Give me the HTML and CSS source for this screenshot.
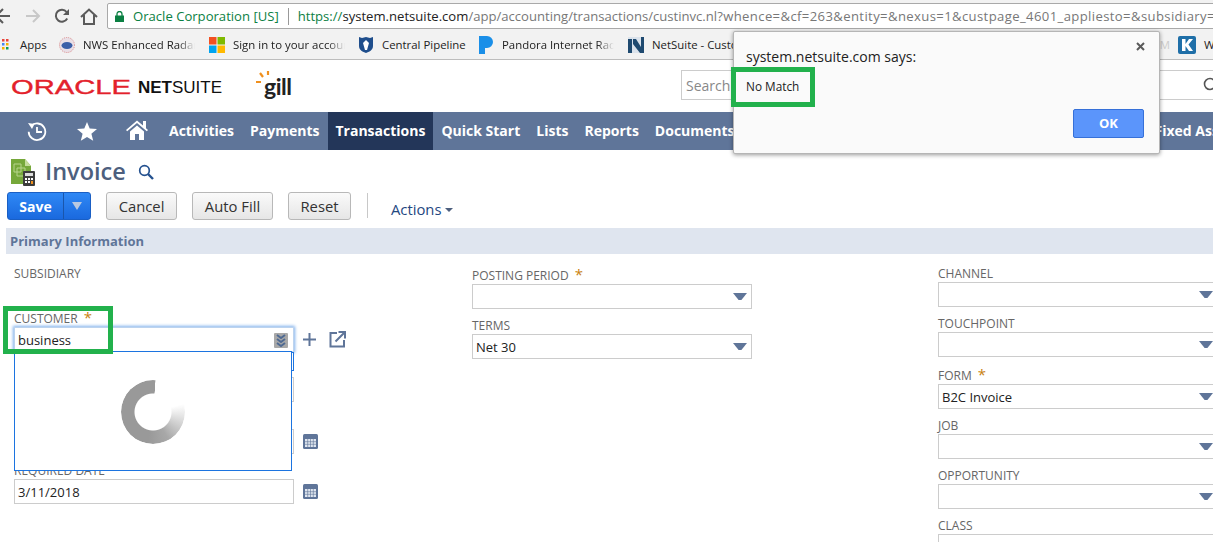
FILE: index.html
```html
<!DOCTYPE html>
<html lang="en">
<head>
<meta charset="utf-8">
<title>Invoice - NetSuite</title>
<link rel="stylesheet" href="styles.css">
</head>
<body>
<div class="page">
  <header class="toolbar">
    <svg class="tb-icon back" width="14" height="16" viewBox="0 0 14 16"><path d="M10 8H-4M3 1L-4 8l7 7" fill="none" stroke="#5a5a5a" stroke-width="2"/></svg>
    <svg class="tb-icon fwd" width="16" height="16" viewBox="0 0 16 16"><path d="M1 8h13M8 2l6 6-6 6" fill="none" stroke="#c8c8c8" stroke-width="2"/></svg>
    <svg class="tb-icon reload" width="16" height="16" viewBox="0 0 16 16"><path d="M13.2 10.5A6 6 0 1 1 12.6 4" fill="none" stroke="#5a5a5a" stroke-width="2"/><path d="M15 1v6H9z" fill="#5a5a5a"/></svg>
    <svg class="tb-icon home" width="18" height="17" viewBox="0 0 18 17"><path d="M1 9l8-7.5L17 9M4 7v9h10V7" fill="none" stroke="#5a5a5a" stroke-width="2"/></svg>
    <div class="omnibox">
      <svg class="lock" width="9" height="11" viewBox="0 0 9 11"><path d="M0 4.500h9V11H0z" fill="#0b8043"/><path d="M2 5V3a2.500 2.500 0 0 1 5 0v2" fill="none" stroke="#0b8043" stroke-width="1.300"/></svg>
      <span class="org">Oracle Corporation [US]</span>
      <span class="sep"></span>
      <span class="url"><span class="scheme">https://</span><span class="host">system.netsuite.com</span>/app/accounting/transactions/custinvc.nl<span class="query">?whence=&amp;cf=263&amp;entity=&amp;nexus=1&amp;custpage_4601_appliesto=&amp;subsidiary=</span></span>
    </div>
  </header>

  <nav class="bookmarks">
    <div class="bm bm-apps">
      <svg width="10" height="12" viewBox="0 0 10 12"><g><rect width="2.500" height="2.500" fill="#e8453c"/><rect x="4" width="2.500" height="2.500" fill="#e8453c"/><rect x="0" y="4" width="2.500" height="2.500" fill="#4285f4"/><rect x="4" y="4" width="2.500" height="2.500" fill="#f4b400"/><rect y="8" width="2.500" height="2.500" fill="#f4b400"/><rect x="4" y="8" width="2.500" height="2.500" fill="#0f9d58"/></g></svg>
      <span>Apps</span>
    </div>
    <div class="bm bm-nws">
      <svg width="16" height="16" viewBox="0 0 16 16"><circle cx="8" cy="8" r="7.500" fill="#e9dfe6" stroke="#d98a8a" stroke-dasharray="1 1"/><ellipse cx="8" cy="8.500" rx="5.500" ry="3.500" fill="#3a5fa8"/></svg>
      <span class="fade">NWS Enhanced Radar</span>
    </div>
    <div class="bm bm-ms">
      <svg width="16" height="16" viewBox="0 0 16 16"><rect width="7.500" height="7.500" fill="#f25022"/><rect x="8.500" width="7.500" height="7.500" fill="#7fba00"/><rect y="8.500" width="7.500" height="7.500" fill="#00a4ef"/><rect x="8.500" y="8.500" width="7.500" height="7.500" fill="#ffb900"/></svg>
      <span class="fade">Sign in to your account</span>
    </div>
    <div class="bm bm-cp">
      <svg width="16" height="18" viewBox="0 0 16 18"><path d="M1 1l3 1 4-1 4 1 3-1v9c0 4-4 6-7 7-3-1-7-3-7-7z" fill="#1f4e8c"/><path d="M8 4l3 3-2 7H7L5 7z" fill="#fff"/></svg>
      <span>Central Pipeline</span>
    </div>
    <div class="bm bm-pan">
      <svg width="15" height="18" viewBox="0 0 15 18"><path d="M0 0h8a6 6 0 0 1 0 12H6v6H0z" fill="#1a8fe8"/></svg>
      <span class="fade">Pandora Internet Radio</span>
    </div>
    <div class="bm bm-ns">
      <svg width="16" height="16" viewBox="0 0 16 16"><rect width="16" height="16" fill="#dbe3ec"/><path d="M0 2h4v14H0zM5 2h3l5 8V0h3v16h-4L5 7z" fill="#1f4a70"/></svg>
      <span>NetSuite - Customer Center</span>
      <span class="ghost">M</span>
    </div>
    <div class="bm bm-k">
      <svg width="18" height="18" viewBox="0 0 18 18"><rect width="18" height="18" rx="2" fill="#1f6fa8"/><path d="M4 3h3.500v5L11 3h4l-4.500 5.500L15 15h-4L7.500 10v5H4z" fill="#fff"/></svg>
      <span>W</span>
    </div>
  </nav>

  <div class="brand">
    <svg class="oracle" width="121" height="20" viewBox="0 0 121 20"><text x="0" y="17" textLength="120" lengthAdjust="spacingAndGlyphs">ORACLE</text></svg>
    <span class="netsuite"><b>NET</b>SUITE</span>
    <div class="gill">
      <svg class="rays" width="16" height="22" viewBox="0 0 16 22"><path d="M0 11h5M4 2l3 4M12 0v4" stroke="#f0901e" stroke-width="2.200" fill="none"/></svg>
      <span>gill</span>
    </div>
    <div class="global-search">
      <span>Search</span>
      <svg width="14" height="16" viewBox="0 0 14 16"><circle cx="8" cy="7" r="5.500" fill="none" stroke="#555" stroke-width="1.600"/></svg>
    </div>
  </div>

  <nav class="mainnav">
    <svg class="nav-ic ic-hist" width="20" height="21" viewBox="0 0 20 21"><path d="M4 5a8.300 8.300 0 1 1-2.300 5.700" fill="none" stroke="#fff" stroke-width="1.800"/><path d="M1 2l6.500 1L5 8z" fill="#fff"/><path d="M10 6v5h5" fill="none" stroke="#fff" stroke-width="1.800"/></svg>
    <svg class="nav-ic ic-star" width="20" height="19" viewBox="0 0 20 19"><path d="M10 0l2.700 6.600 7.300.5-5.600 4.600 1.800 7L10 14.900l-6.200 3.800 1.800-7L0 7.100l7.300-.5z" fill="#fff"/></svg>
    <svg class="nav-ic ic-home" width="22" height="20" viewBox="0 0 22 20"><path d="M0 10L11 0.500l6 5V1h3v7.200l2 1.800-1.200 1.300L11 3 1.200 11.300z" fill="#fff"/><path d="M4 11.500L11 5.500l7 6V20h-5v-6H9v6H4z" fill="#fff"/></svg>
    <a class="nav-item nav-first">Activities</a>
    <a class="nav-item">Payments</a>
    <a class="nav-item active">Transactions</a>
    <a class="nav-item">Quick Start</a>
    <a class="nav-item">Lists</a>
    <a class="nav-item">Reports</a>
    <a class="nav-item">Documents</a>
    <a class="nav-item nav-last">Fixed Assets</a>
  </nav>

  <div class="titlebar">
    <svg class="doc-ic" width="26" height="29" viewBox="0 0 26 29"><path d="M1 1h14l6 7v18H1z" fill="#76a83a"/><path d="M15 1l6 7h-6z" fill="#c5dc9c"/><path d="M4 6h7v8H4zM7 10h8v8H7z" fill="none" stroke="#b7d48c" stroke-width="1"/><rect x="13" y="13" width="12" height="15" rx="1" fill="#3c3c3c"/><rect x="15" y="15" width="8" height="3" fill="#ddd"/><path d="M15 20h2v2h-2zM18 20h2v2h-2zM21 20h2v2h-2zM15 23h2v2h-2zM18 23h2v2h-2z" fill="#fff"/><path d="M21 23h2v3h-2z" fill="#f0901e"/></svg>
    <h1>Invoice</h1>
    <svg class="find" width="16" height="16" viewBox="0 0 16 16"><circle cx="6.500" cy="6.500" r="4.800" fill="none" stroke="#24518f" stroke-width="1.700"/><path d="M10 10l5 5" stroke="#24518f" stroke-width="2.400"/></svg>
  </div>

  <div class="actions">
    <div class="save">
      <span class="save-main">Save</span>
      <span class="save-drop"><i></i></span>
    </div>
    <button class="btn btn-cancel">Cancel</button>
    <button class="btn btn-fill">Auto Fill</button>
    <button class="btn btn-reset">Reset</button>
    <span class="divider"></span>
    <span class="more">Actions<i></i></span>
  </div>

  <div class="section">Primary Information</div>

  <section class="form">
    <div class="col">
      <div class="field field-static"><label>SUBSIDIARY</label></div>
      <div class="field">
        <label>CUSTOMER <em>*</em></label>
        <div class="row">
          <div class="control focus">business
            <svg class="pick" width="14" height="15" viewBox="0 0 14 15"><rect width="14" height="15" rx="1" fill="#a8a8a8"/><path d="M3 2l4 3 4-3M3 6l4 3 4-3M3 10l4 3 4-3" fill="none" stroke="#4f6a92" stroke-width="2"/></svg>
          </div>
          <svg class="ic-plus" width="13" height="13" viewBox="0 0 13 13"><path d="M6.500 0v13M0 6.500h13" stroke="#5f7599" stroke-width="2"/></svg>
          <svg class="ic-open" width="17" height="17" viewBox="0 0 17 17"><path d="M8 2H1.500v13.500H15V9" fill="none" stroke="#5f7599" stroke-width="2"/><path d="M6.500 10.500L15 2M9.500 1H16v6.500" fill="none" stroke="#5f7599" stroke-width="2"/></svg>
        </div>
      </div>
      <div class="field">
        <label></label>
        <div class="control"></div>
      </div>
      <div class="field field-req">
        <label></label>
        <div class="row">
          <div class="control"></div>
          <svg class="ic-cal" width="15" height="15" viewBox="0 0 15 15"><rect width="15" height="15" rx="1.500" fill="#5f7599"/><path d="M2 5h11v8H2z" fill="#dfe5ef"/><path d="M4.700 5v8M7.500 5v8M10.300 5v8M2 7.700h11M2 10.300h11" stroke="#5f7599" stroke-width=".6"/></svg>
        </div>
      </div>
      <div class="field">
        <label>REQUIRED DATE</label>
        <div class="row">
          <div class="control">3/11/2018</div>
          <svg class="ic-cal" width="15" height="15" viewBox="0 0 15 15"><rect width="15" height="15" rx="1.500" fill="#5f7599"/><path d="M2 5h11v8H2z" fill="#dfe5ef"/><path d="M4.700 5v8M7.500 5v8M10.300 5v8M2 7.700h11M2 10.300h11" stroke="#5f7599" stroke-width=".6"/></svg>
        </div>
      </div>
    </div>

    <div class="col col-mid">
      <div class="field"><label>POSTING PERIOD <em>*</em></label><div class="control select"><i></i></div></div>
      <div class="field"><label>TERMS</label><div class="control select">Net 30<i></i></div></div>
    </div>

    <div class="col">
      <div class="field"><label>CHANNEL</label><div class="control select"><i></i></div></div>
      <div class="field"><label>TOUCHPOINT</label><div class="control select"><i></i></div></div>
      <div class="field field-req"><label>FORM <em>*</em></label><div class="control select">B2C Invoice<i></i></div></div>
      <div class="field"><label>JOB</label><div class="control select"><i></i></div></div>
      <div class="field"><label>OPPORTUNITY</label><div class="control select"><i></i></div></div>
      <div class="field"><label>CLASS</label><div class="control select"><i></i></div></div>
    </div>
  </section>

  <div class="under-list"></div>
  <div class="popup"><div class="spinner"></div></div>
  <div class="mark mark-customer"></div>

  <div class="dialog">
    <svg class="close" width="9" height="9" viewBox="0 0 9 9"><path d="M1 1l7 7M8 1L1 8" stroke="#5a5a5a" stroke-width="2"/></svg>
    <p class="dlg-title">system.netsuite.com says:</p>
    <p class="dlg-msg">No Match</p>
    <div class="dlg-foot"><button class="ok">OK</button></div>
  </div>
  <div class="mark mark-match"></div>
</div>
</body>
</html>
```

FILE: styles.css
```css
* { box-sizing: border-box; }
html, body { margin: 0; padding: 0; height: 542px; overflow: hidden; background: #fff; }
.page { position: relative; width: 1213px; height: 542px; overflow: hidden; font-family: "Open Sans", "Noto Sans", sans-serif; color: #333; }

/* browser chrome */
.toolbar { height: 30px; background: #f2f2f2; display: flex; align-items: center; position: relative; padding-top: 2px; }
.tb-icon { display: block; flex: none; }
.fwd { margin-left: 11px; }
.reload { margin-left: 13px; }
.home { margin-left: 10px; }
.omnibox { flex: none; margin-left: 9px; width: 1120px; height: 26px; background: #fff; border: 1px solid #a9a9a9; border-radius: 2px; display: flex; align-items: center; padding-left: 7px; white-space: nowrap; font-size: 13.100px; overflow: hidden; }
.lock { flex: none; }
.org { margin-left: 9px; color: #0b8043; }
.sep { width: 1px; height: 17px; background: #999; margin: 0 9px 0 9px; flex: none; }
.url { color: #777; }
.query { letter-spacing: .38px; }
.scheme { color: #0b8043; }
.host { color: #222; }

.bookmarks { height: 30px; background: #f2f2f2; border-bottom: 1px solid #bdbdbd; display: flex; align-items: center; padding-left: 2px; font-size: 11.400px; color: #222; white-space: nowrap; }
.bm { display: flex; align-items: center; gap: 8px; flex: none; overflow: hidden; }
.bm svg { flex: none; }
.bm-apps { width: 57px; }
.bm-nws { width: 150px; }
.bm-ms, .bm-pan { width: 149px; }
.bm-cp { width: 121px; }
.bm-ns { width: 550px; }
.bm-k { width: 36px; }
.ghost { margin-left: auto; margin-right: 8px; color: #ccc; }
.fade { width: 112px; overflow: hidden; -webkit-mask-image: linear-gradient(to right, #000 85%, transparent); mask-image: linear-gradient(to right, #000 85%, transparent); }

/* brand row */
.brand { height: 52px; display: flex; align-items: center; padding-left: 11px; background: #fff; }
.oracle { flex: none; display: block; margin-top: 1px; }
.oracle text { font-family: "Liberation Sans", sans-serif; font-size: 20px; fill: #e3212b; stroke: #e3212b; stroke-width: .35px; }
.netsuite { margin-left: 6px; font: 400 17px/1 "Liberation Sans", sans-serif; color: #111; flex: none; width: 118px; margin-top: 2px; }
.netsuite b { font-weight: 700; }
.gill { position: relative; flex: none; width: 40px; height: 36px; display: flex; align-items: center; margin-right: 385px; }
.rays { position: absolute; left: 0; top: 3px; }
.gill span { margin-left: 8px; font: 700 23px/1 "Lato", sans-serif; color: #222; letter-spacing: -.5px; }
.global-search { flex: none; width: 540px; height: 30px; border: 1px solid #ccc; display: flex; align-items: center; justify-content: space-between; padding: 0 0 0 4px; color: #888; font-size: 14px; overflow: hidden; margin-top: -2px; }
.global-search svg { margin-right: 4px; flex: none; }

/* nav */
.mainnav { height: 38px; background: #5f7599; display: flex; align-items: center; padding-left: 27px; white-space: nowrap; position: relative; }
.nav-ic { flex: none; display: block; }
.ic-star { margin-left: 30px; }
.ic-home { margin-left: 29px; margin-top: -2px; }
.nav-item { height: 38px; line-height: 38px; padding: 0 8px; color: #fff; font-size: 14px; font-weight: 700; flex: none; }
.nav-first { margin-left: 13px; }
.nav-item.active { background: #233659; }
.nav-last { margin-left: 404px; }

/* title */
.titlebar { height: 42px; display: flex; align-items: center; padding-left: 10px; }
.doc-ic { flex: none; display: block; margin-top: 2px; }
h1 { margin: 2px 0 0 9px; font-size: 23.500px; font-weight: 600; color: #4d5f7e; line-height: 1; }
.find { margin-left: 12px; flex: none; margin-top: 2px; }

/* actions */
.actions { height: 36px; display: flex; align-items: flex-start; padding-left: 7px; }
.save { width: 84px; height: 28px; display: flex; border: 1px solid #1a5fc4; border-radius: 3px; background: linear-gradient(#2f88f5, #1a69de); flex: none; }
.save-main { width: 56px; line-height: 27px; text-align: center; color: #fff; font-size: 14px; font-weight: 700; border-right: 1px solid #1a56ab; }
.save-drop { flex: 1; display: flex; align-items: center; justify-content: center; }
.save-drop i { width: 0; height: 0; border-left: 5px solid transparent; border-right: 5px solid transparent; border-top: 8px solid #b9c9e0; }
.btn { height: 28px; border: 1px solid #b8b8b8; border-radius: 3px; background: linear-gradient(#fafafa, #e6e6e6); font: 400 14.800px/1 "Open Sans", sans-serif; color: #333; padding: 1px 0 0; flex: none; }
.btn-cancel { width: 71px; margin-left: 15px; }
.btn-fill { width: 81px; margin-left: 15px; }
.btn-reset { width: 63px; margin-left: 15px; }
.divider { width: 1px; height: 25px; background: #c8c8c8; margin: 1px 23px 0 16px; flex: none; }
.more { color: #24477f; font-size: 14.800px; line-height: 34px; display: flex; align-items: center; flex: none; height: 34px; }
.more i { width: 0; height: 0; margin-left: 4px; margin-top: 2px; border-left: 4px solid transparent; border-right: 4px solid transparent; border-top: 4px solid #4d5f7e; }

/* section */
.section { margin-left: 6px; height: 26px; background: #dfe5ef; color: #5f7599; font-size: 13px; font-weight: 700; line-height: 26px; padding-left: 4px; }

/* form */
.form { display: grid; grid-template-columns: 458px 466px 1fr; padding: 12px 0 0 14px; }
.col-mid { padding-top: 2px; }
.field + .field { margin-top: 9px; }
.field + .field-req { margin-top: 11px; }
.field-static { height: 36px; }
label { display: block; height: 14px; margin-bottom: 2px; font-size: 12px; line-height: 16px; color: #666; white-space: nowrap; }
label em { font-style: normal; color: #c9820f; font-size: 15px; margin-left: 3px; line-height: 10px; }
.row { display: flex; align-items: center; }
.control { position: relative; width: 280px; height: 25px; flex: none; border: 1px solid #ccc; background: #fff; font-size: 13px; line-height: 24px; padding-left: 3px; color: #222; white-space: nowrap; }
.focus { border-color: #bcd3ee; box-shadow: 0 0 3px 1px #7fb0ec; }
.pick { position: absolute; right: 5px; top: 5px; }
.select i { position: absolute; right: 4px; top: 8px; width: 14px; height: 7px; background: #5f7599; clip-path: polygon(0 0, 100% 0, 60% 100%, 40% 100%); }
.ic-plus { margin-left: 9px; flex: none; }
.ic-open { margin-left: 13px; flex: none; }
.ic-cal { margin-left: 9px; flex: none; }

/* overlays */
.under-list { position: absolute; left: 14px; top: 352px; width: 280px; height: 19px; border: 1px solid #1c74e0; background: #fff; }
.popup { position: absolute; left: 14px; top: 351px; width: 278px; height: 120px; border: 1px solid #1c74e0; background: #fff; display: flex; align-items: center; justify-content: center; }
.spinner { width: 64px; height: 64px; border-radius: 50%; margin: 2px 0 0 -1px; background: conic-gradient(from 5deg, transparent 0 70deg, #eee 85deg, #a8a8a8 145deg, #999 185deg, #999 359deg, transparent 360deg); -webkit-mask-image: radial-gradient(circle, transparent 18px, #000 19px); mask-image: radial-gradient(circle, transparent 18px, #000 19px); }
.mark { position: absolute; border: 5px solid #22b14c; }
.mark-customer { left: 3px; top: 306px; width: 110px; height: 48px; }
.mark-match { left: 731px; top: 67px; width: 84px; height: 40px; }

.dialog { position: absolute; left: 733px; top: 31px; width: 427px; height: 123px; background: #fafafa; border: 1px solid #b5b5b5; border-radius: 2px; box-shadow: 0 1px 4px rgba(0,0,0,.4); padding: 0 15px 0 12px; display: flex; flex-direction: column; }
.close { position: absolute; right: 14px; top: 10px; }
.dlg-title { margin: 15px 0 0; font-size: 14px; line-height: 20px; color: #222; }
.dlg-msg { margin: 10px 0 0; font-size: 11.800px; line-height: 18px; color: #222; }
.dlg-foot { display: flex; justify-content: flex-end; margin-top: 14px; }
.ok { width: 71px; height: 29px; border: 1px solid #3670d8; border-radius: 2px; background: #5b95fb; color: #fff; font: 700 13px/1 "Open Sans", sans-serif; padding: 0; }
```
